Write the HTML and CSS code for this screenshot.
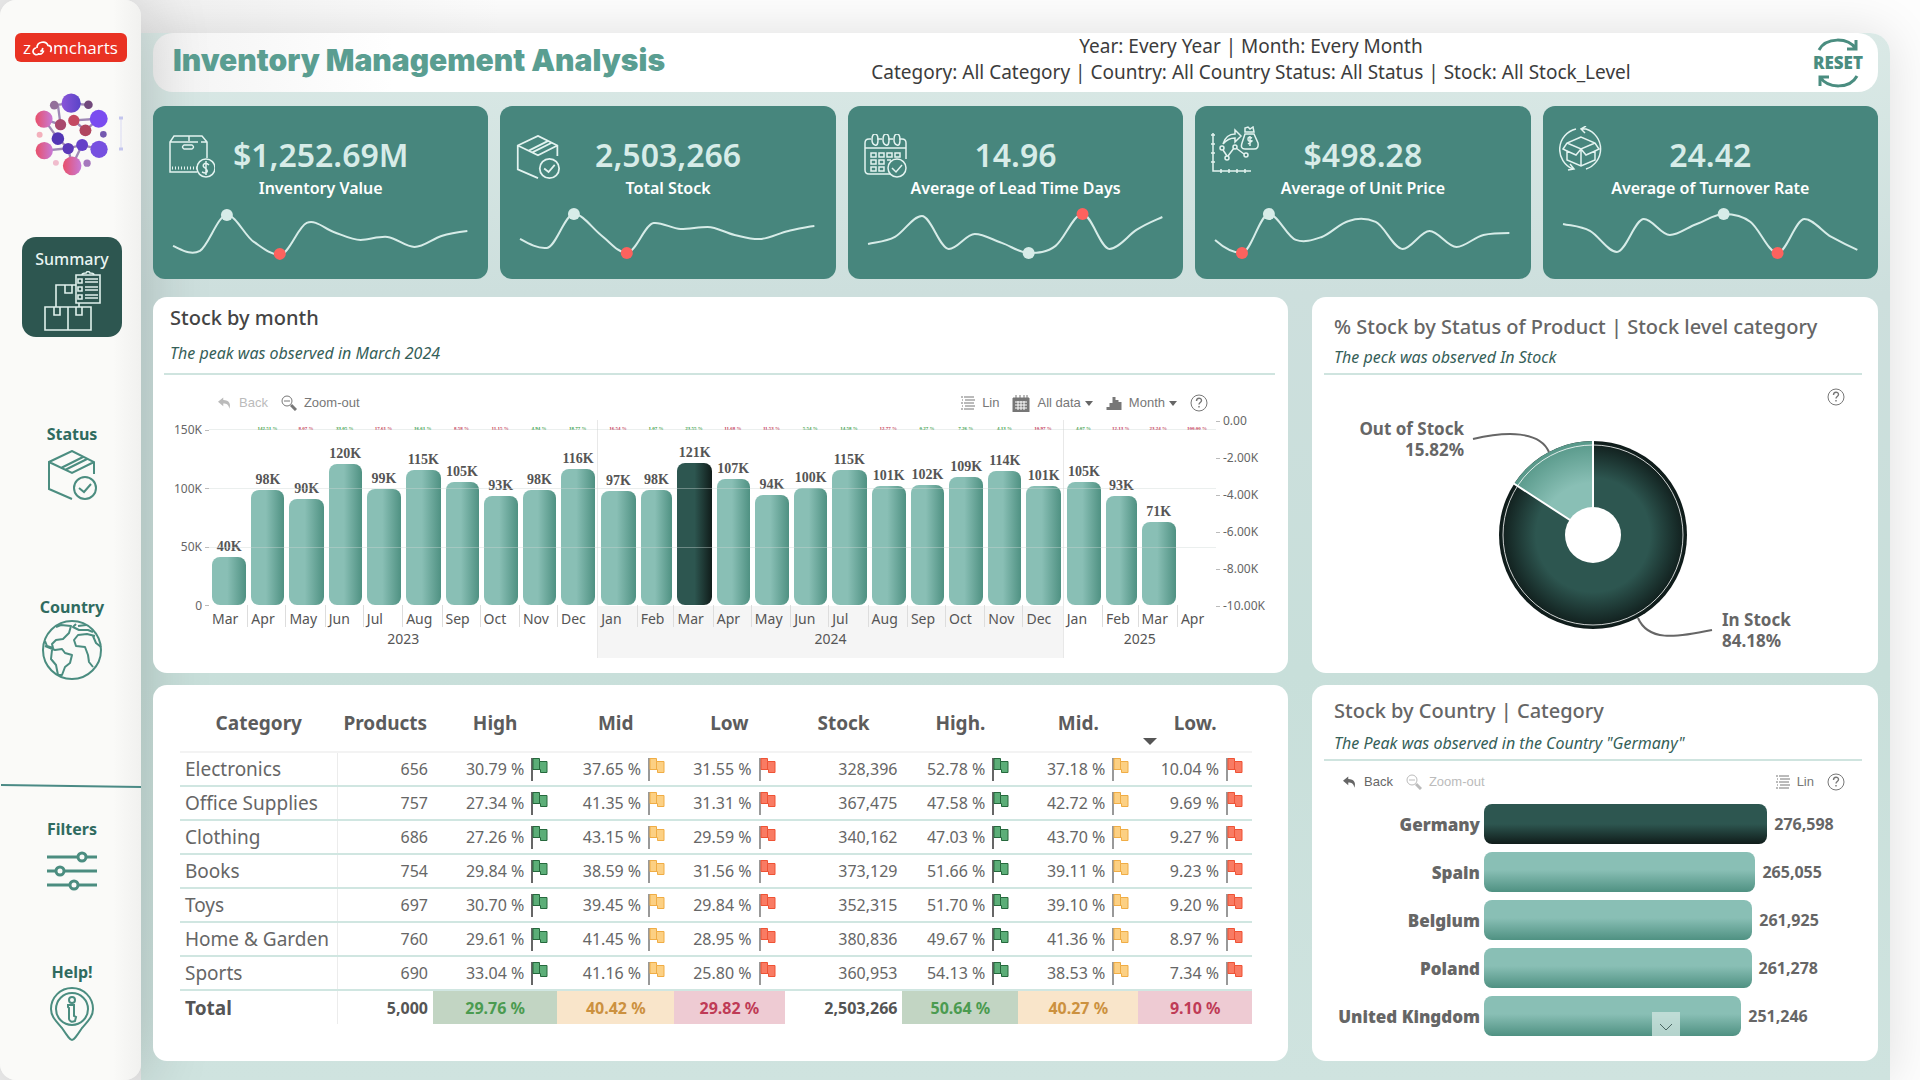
FILE: index.html
```html
<!DOCTYPE html>
<html lang="en">
<head>
<meta charset="utf-8">
<title>Inventory Management Analysis</title>
<link rel="stylesheet" href="styles.css">
</head>
<body>
<svg class="defs" aria-hidden="true">
  <defs>
    <symbol id="flag" viewBox="0 0 17 24">
      <path class="pole" d="M1 1V24"/>
      <path class="cloth" d="M2 1.500H8.500V4.500H16V15.500H9.500V12.500H2Z"/>
      <path class="fold" d="M8.500 4.500V12.500"/>
    </symbol>
    <symbol id="back" viewBox="0 0 16 14">
      <path fill="currentColor" d="M6 0 0 5l6 5V7c4 0 6 1 7 6 2-5 0-10-7-10Z"/>
    </symbol>
    <symbol id="zoomout" viewBox="0 0 16 16">
      <circle cx="6" cy="6" r="5" fill="none" stroke="currentColor"/>
      <path d="M3 6h6" stroke="currentColor"/>
      <path d="m10 10 5 5" stroke="currentColor" stroke-width="3"/>
    </symbol>
    <symbol id="lines" viewBox="0 0 14 14">
      <path d="M0 1h2M3 1h10M1 4h1M4 4h10M0 7h2M3 7h10M1 10h1M4 10h10M0 13h2M3 13h10" stroke="currentColor"/>
    </symbol>
    <symbol id="help" viewBox="0 0 18 18">
      <circle cx="9" cy="9" r="8" fill="none" stroke="currentColor"/>
      <path d="M6.500 7c0-3.500 5-3.500 5-.5 0 2-2.500 2-2.500 4M9 12v1.500" fill="none" stroke="currentColor" stroke-width="1.400"/>
    </symbol>
    <symbol id="boxcheck" viewBox="0 0 50 50">
      <path d="M25 49 2 39V12L25 1l22 11v12M2 12l23 11 22-11M14 18 36 7M18 20 40 9" fill="none" stroke="currentColor" stroke-width="2"/>
      <circle cx="38" cy="38" r="11" fill="none" stroke="currentColor" stroke-width="2"/>
      <path d="m32 38 5 4 7-8" fill="none" stroke="currentColor" stroke-width="2"/>
    </symbol>
  </defs>
</svg>
<div class="page">
  <aside class="sidebar">
    <a class="brand" href="#" aria-label="zoomcharts"><span>z</span><svg viewBox="0 0 26 18"><path d="M6 9a4 4 0 1 0 3 7c4 1 5-1 6-4M7 9c0-8 11-9 13-3 4 0 5 4 3 8M11 13l2-1 1-3" fill="none" stroke="#fff" stroke-width="2"/></svg><span>mcharts</span></a>
    <div class="gem">
      <svg class="gem-art" viewBox="102 276 226 252">
        <defs>
          <linearGradient id="pink" x1="0" x2="1"><stop offset="0" stop-color="#e8506a"/><stop offset="1" stop-color="#c77ad8"/></linearGradient>
          <linearGradient id="violet" x1="0" x2="1"><stop offset="0" stop-color="#8a55d8"/><stop offset="1" stop-color="#5a44c8"/></linearGradient>
        </defs>
        <path d="M163 315 214 310 266 314M132 357l50 17-8-60M222 361l75-5-40 35-35-30M297 356l-40 35M174 416l-42-59M174 416l31 29 42-10 51 13M133 452l72-7M217 497l30-62M205 445l12 52" fill="none" stroke="#77589a" stroke-width="7" opacity=".7"/>
        <circle cx="214" cy="309" r="29" fill="url(#violet)"/><circle cx="132" cy="357" r="26" fill="url(#pink)"/>
        <circle cx="297" cy="356" r="27" fill="#7a4cf0"/><circle cx="133" cy="452" r="26" fill="url(#pink)"/>
        <circle cx="298" cy="448" r="26" fill="#7650e0"/><circle cx="217" cy="498" r="28" fill="url(#pink)"/>
        <circle cx="222" cy="361" r="17" fill="#c44a62"/><circle cx="182" cy="374" r="17" fill="#a9486c"/>
        <circle cx="257" cy="391" r="18" fill="#b0465f"/><circle cx="174" cy="416" r="19" fill="#5236b4"/>
        <circle cx="205" cy="446" r="17" fill="#5b38b8"/><circle cx="247" cy="435" r="18" fill="#6440c8"/>
        <circle cx="163" cy="315" r="13" fill="#93709a"/><circle cx="266" cy="314" r="13" fill="#71487c"/>
        <circle cx="119" cy="404" r="9" fill="#f3b0bc"/><circle cx="311" cy="403" r="10" fill="#7459b0"/>
        <circle cx="168" cy="489" r="9" fill="#f0bccd"/><circle cx="262" cy="490" r="11" fill="#a678bd"/>
      </svg>
      <svg class="gem-mark" viewBox="0 0 4 36"><path d="M2 2v32" stroke="#d9daf3"/><path d="M0 2h4M0 33h4" stroke="#c3c5ee" stroke-width="3"/></svg>
    </div>
    <nav class="nav">
      <button class="nav-item nav-active" type="button">Summary
        <svg width="58" height="60" viewBox="0 0 58 60" fill="none" stroke="#dff0ec" stroke-width="1.600">
          <path d="M2 36h46v23H2ZM25 36v23M11 36v8h6v-8M33 36v8h6v-8M36 36v-4M13 36V14h20M22 14v8h7v-8"/>
          <path d="M33 4h24v28H33ZM39 4q0-2 4-2 2-3 4 0 4 0 4 2M35 8h4v4h-4ZM35 16h4v4h-4ZM35 24h4v4h-4ZM42 8h13M42 11h13M42 16h13M42 19h13M42 24h13M42 27h13"/>
        </svg>
      </button>
      <button class="nav-item nav-status" type="button">Status
        <svg width="50" height="50"><use href="#boxcheck"/></svg>
      </button>
      <button class="nav-item nav-country" type="button">Country
        <svg width="62" height="62" viewBox="0 0 62 62" fill="none" stroke="currentColor" stroke-width="2" stroke-linejoin="round">
          <circle cx="31" cy="31" r="29"/>
          <path d="M15 8l5-2 10 1-2 7-6 6-7 1-4 4 1 4-6-2-2-5M35 5l-3 3 6 3h9l5 2M37 7l8-1M54 17l-8-2-9 1-4 5 2 6 9 1 3 8 1 7 4 5M52 17l3 7 5 4M4 27l10 4 7-1 3 4 7 2-2 8-5 4-3 8-4 0-2-10-5-6 1-9"/>
        </svg>
      </button>
      <svg class="nav-rule" height="4" viewBox="0 0 141 4" preserveAspectRatio="none"><path d="M1 1 141 3" stroke="#4a8a85" stroke-width="2"/></svg>
      <button class="nav-item nav-filters" type="button">Filters
        <svg width="50" height="42" viewBox="0 0 50 42" fill="#fafaf8" stroke="currentColor" stroke-width="3"><path d="M0 7h50M0 21h50M0 35h50"/><circle cx="35" cy="7" r="4"/><circle cx="13" cy="21" r="4"/><circle cx="27" cy="35" r="4"/></svg>
      </button>
      <button class="nav-item nav-help" type="button">Help!
        <svg width="44" height="54" viewBox="0 0 44 54" fill="none" stroke="currentColor" stroke-width="2"><path d="M22 53c-2 0-4-3-10-12C5 33 1 29 1 22a21 21 0 0 1 42 0c0 7-4 11-11 19-6 9-8 12-10 12Z"/><circle cx="22" cy="22" r="16"/><circle cx="22" cy="13" r="3"/><path d="M18 18h6v11l2 1-1 4q-5 2-6-2V21l-1-1Z"/></svg>
      </button>
    </nav>
  </aside>

  <main class="board">
    <header class="topbar">
      <h1>Inventory Management Analysis</h1>
      <p>Year: Every Year | Month: Every Month<br>Category: All Category | Country: All Country Status: All Status | Stock: All Stock_Level</p>
      <button class="reset" type="button">
        <svg width="42" height="14" viewBox="0 0 42 14" fill="none" stroke="currentColor" stroke-width="3"><path d="M2 12C9 -1 31 -1 39 11M39 2v9h-9"/></svg>
        RESET
        <svg width="42" height="14" viewBox="0 0 42 14" fill="none" stroke="currentColor" stroke-width="3"><path d="M40 2C33 15 11 15 3 3M3 12V3h9"/></svg>
      </button>
    </header>

    <section class="kpis">
      <article class="kpi">
        <svg class="kpi-icon" width="46" height="46" viewBox="0 0 46 46"><path d="M28 38H1V8l4-6h28l5 6v16M1 8h28M32 8h6M20 2v5M15 11h8q3 2 0 4h-8q-3-2 0-4Z"/><path d="M3 34h26" stroke-dasharray="1 2" stroke-width="3"/><circle cx="37" cy="34" r="9"/><path d="M40 31q-3-3-5-1t1 4 2 4-5 0M37 27v14"/></svg>
        <div class="kpi-text"><strong>$1,252.69M</strong><span>Inventory Value</span></div>
        <svg class="spark" viewBox="0 0 296 56"><path d="M0 41C9 45 18 51 27 46C36 40 45 10 54 10C63 10 72 31 81 37C90 43 98 50 107 50C116 50 125 22 134 18C143 14 152 24 161 27C170 30 179 35 188 35C197 35 206 31 215 32C224 33 233 42 242 42C251 42 260 34 269 31C278 28 286 27 295 26"/><circle class="hi" cx="54" cy="10" r="6"/><circle class="lo" cx="107" cy="49" r="6"/></svg>
      </article>
      <article class="kpi">
        <svg class="kpi-icon" width="44" height="46" viewBox="0 0 50 50"><use href="#boxcheck"/></svg>
        <div class="kpi-text"><strong>2,503,266</strong><span>Total Stock</span></div>
        <svg class="spark" viewBox="0 0 296 56"><path d="M0 34C9 39 18 44 27 43C36 42 45 9 54 9C63 9 72 23 81 30C90 37 98 48 107 48C116 48 125 19 134 18C143 17 152 24 161 24C170 24 179 22 188 22C197 22 206 28 215 30C224 32 233 35 242 34C251 33 260 28 269 26C278 24 286 22 295 21"/><circle class="hi" cx="54" cy="9" r="6"/><circle class="lo" cx="107" cy="48" r="6"/></svg>
      </article>
      <article class="kpi">
        <svg class="kpi-icon" width="46" height="46" viewBox="0 0 46 46"><path d="M26 40H5q-4 0-4-4V9q0-4 4-4h2M13 5h5M24 5h5M35 5h3q4 0 4 4v16M1 14h41M8 6q0-6 3-6t3 6-3 5-3-5M19 6q0-6 3-6t3 6-3 5-3-5M30 6q0-6 3-6t3 6-3 5-3-5M7 19h5v4H7ZM15 19h5v4h-5ZM23 19h5v4h-5ZM31 19h5v4h-5ZM7 26h5v4H7ZM15 26h5v4h-5ZM23 26h4M7 33h5v4H7ZM15 33h5v4h-5Z"/><circle cx="33" cy="34" r="9"/><path d="m28 34 4 4 6-7"/></svg>
        <div class="kpi-text"><strong>14.96</strong><span>Average of Lead Time Days</span></div>
        <svg class="spark" viewBox="0 0 296 56"><path d="M0 39C9 37 18 37 27 32C36 27 45 11 54 11C63 11 72 44 81 44C90 44 98 29 107 29C116 29 125 35 134 38C143 41 152 48 161 48C170 48 179 48 188 41C197 34 206 9 215 9C224 9 233 44 242 44C251 44 260 31 269 25C278 19 286 16 295 12"/><circle class="hi" cx="161" cy="48" r="6"/><circle class="lo" cx="215" cy="9" r="6"/></svg>
      </article>
      <article class="kpi">
        <svg class="kpi-icon icon-high" width="48" height="48" viewBox="0 0 48 48"><path d="M2 7v38h38M0 9h4M0 18h4M0 27h4M0 36h4M10 43v4M18 43v4M26 43v4M34 43v4M12 24l4 6M17 30l6-8M25 22l8 6M12 18Q15 8 24 8V4l6 6-6 6v-4Q17 12 12 18M34 6h9l-1-5-3 2-2-2-3 1ZM34 8h9l4 9q1 6-4 6h-9q-5 0-3-6Z"/><circle cx="11" cy="22" r="2"/><circle cx="16" cy="32" r="2"/><circle cx="24" cy="21" r="2"/><circle cx="35" cy="29" r="2"/><path d="M41 12q-4-2-4 1t3 2-3 3M39 10v10"/></svg>
        <div class="kpi-text"><strong>$498.28</strong><span>Average of Unit Price</span></div>
        <svg class="spark" viewBox="0 0 296 56"><path d="M0 35C9 43 18 48 27 48C36 48 45 9 54 9C63 9 72 32 81 35C90 38 98 35 107 32C116 29 125 18 134 16C143 13 152 13 161 17C170 21 179 44 188 44C197 44 206 26 215 26C224 26 233 42 242 42C251 42 260 32 269 30C278 28 286 28 295 28"/><circle class="lo" cx="27" cy="48" r="6"/><circle class="hi" cx="54" cy="9" r="6"/></svg>
      </article>
      <article class="kpi">
        <svg class="kpi-icon icon-high" width="44" height="46" viewBox="0 0 44 46"><path d="M17 3A21 21 0 0 0 14 43M11 38l4 5-6 1M27 43A21 21 0 0 0 27 3l-5 0M27 0l-5 3 4 4M22 11 8 17l-4 6 4 2v9l14 6 14-6v-9l4-2-4-6ZM8 17l14 6 14-6M22 23v17M22 23l-5 6-9-4M22 23l5 6 9-4"/></svg>
        <div class="kpi-text"><strong>24.42</strong><span>Average of Turnover Rate</span></div>
        <svg class="spark" viewBox="0 0 296 56"><path d="M0 19C9 21 18 21 27 26C36 31 45 47 54 47C63 47 72 14 81 14C90 14 98 30 107 30C116 30 125 22 134 19C143 16 152 9 161 9C170 9 179 10 188 17C197 24 206 48 215 48C224 48 233 14 242 14C251 14 260 27 269 32C278 37 286 41 295 45"/><circle class="hi" cx="161" cy="9" r="6"/><circle class="lo" cx="215" cy="48" r="6"/></svg>
      </article>
    </section>

    <section class="cards">
      <article class="card">
        <div class="card-head head-wide"><h2>Stock by month</h2><p>The peak was observed in March 2024</p></div>
        <div class="toolbar toolbar-month">
          <button class="tool tool-off" type="button"><svg width="14" height="13"><use href="#back"/></svg>Back</button>
          <button class="tool" type="button"><svg width="16" height="16"><use href="#zoomout"/></svg>Zoom-out</button>
          <span class="tool-gap"></span>
          <button class="tool" type="button"><svg width="14" height="14"><use href="#lines"/></svg>Lin</button>
          <button class="tool" type="button"><svg width="18" height="17" viewBox="0 0 18 17"><path d="M1 3h16v14H1ZM4 0v5M8 0v5M12 0v5M15 0v5" fill="currentColor" stroke="currentColor"/><path d="M3 7h12M3 10h12M3 13h12M6 6v9M9 6v9M12 6v9" stroke="#fff"/></svg>All data<i class="caret"></i></button>
          <button class="tool" type="button"><svg width="16" height="14" viewBox="0 0 16 14"><path d="M2 14v-3M5 14V7M8 14V1M11 14V4M14 14V6" stroke="currentColor" stroke-width="3"/></svg>Month<i class="caret"></i></button>
          <button class="tool" type="button" aria-label="Help"><svg width="18" height="18"><use href="#help"/></svg></button>
        </div>
        <div class="chart">
          <div class="axis axis-left"><span>150K</span><span>100K</span><span>50K</span><span>0</span></div>
          <div class="plot">
            <div class="year" style="flex-grow:306">
              <div class="months">
                <div class="month" style="flex-grow:31"><div class="col"><b>40K</b><i style="height:25.7%"></i></div><span>Mar</span></div>
                <div class="month" style="flex-grow:30"><div class="col"><em class="up">142.51 %</em><b>98K</b><i style="height:62.2%"></i></div><span>Apr</span></div>
                <div class="month" style="flex-grow:31"><div class="col"><em class="down">8.07 %</em><b>90K</b><i style="height:57.1%"></i></div><span>May</span></div>
                <div class="month" style="flex-grow:30"><div class="col"><em class="up">33.05 %</em><b>120K</b><i style="height:76.2%"></i></div><span>Jun</span></div>
                <div class="month" style="flex-grow:31"><div class="col"><em class="down">17.61 %</em><b>99K</b><i style="height:62.8%"></i></div><span>Jul</span></div>
                <div class="month" style="flex-grow:31"><div class="col"><em class="up">16.61 %</em><b>115K</b><i style="height:72.9%"></i></div><span>Aug</span></div>
                <div class="month" style="flex-grow:30"><div class="col"><em class="down">8.58 %</em><b>105K</b><i style="height:66.6%"></i></div><span>Sep</span></div>
                <div class="month" style="flex-grow:31"><div class="col"><em class="down">11.15 %</em><b>93K</b><i style="height:59%"></i></div><span>Oct</span></div>
                <div class="month" style="flex-grow:30"><div class="col"><em class="up">4.94 %</em><b>98K</b><i style="height:62.2%"></i></div><span>Nov</span></div>
                <div class="month" style="flex-grow:31"><div class="col"><em class="up">18.77 %</em><b>116K</b><i style="height:73.6%"></i></div><span>Dec</span></div>
              </div>
              <div class="year-name">2023</div>
            </div>
            <div class="year year-alt" style="flex-grow:366">
              <div class="months">
                <div class="month" style="flex-grow:31"><div class="col"><em class="down">16.54 %</em><b>97K</b><i style="height:61.5%"></i></div><span>Jan</span></div>
                <div class="month" style="flex-grow:29"><div class="col"><em class="up">1.07 %</em><b>98K</b><i style="height:62.2%"></i></div><span>Feb</span></div>
                <div class="month peak" style="flex-grow:31"><div class="col"><em class="up">23.55 %</em><b>121K</b><i style="height:76.7%"></i></div><span>Mar</span></div>
                <div class="month" style="flex-grow:30"><div class="col"><em class="down">11.68 %</em><b>107K</b><i style="height:67.9%"></i></div><span>Apr</span></div>
                <div class="month" style="flex-grow:31"><div class="col"><em class="down">11.53 %</em><b>94K</b><i style="height:59.6%"></i></div><span>May</span></div>
                <div class="month" style="flex-grow:30"><div class="col"><em class="up">5.54 %</em><b>100K</b><i style="height:63.4%"></i></div><span>Jun</span></div>
                <div class="month" style="flex-grow:31"><div class="col"><em class="up">14.58 %</em><b>115K</b><i style="height:72.9%"></i></div><span>Jul</span></div>
                <div class="month" style="flex-grow:31"><div class="col"><em class="down">12.77 %</em><b>101K</b><i style="height:64.1%"></i></div><span>Aug</span></div>
                <div class="month" style="flex-grow:30"><div class="col"><em class="up">0.27 %</em><b>102K</b><i style="height:64.7%"></i></div><span>Sep</span></div>
                <div class="month" style="flex-grow:31"><div class="col"><em class="up">7.26 %</em><b>109K</b><i style="height:69.1%"></i></div><span>Oct</span></div>
                <div class="month" style="flex-grow:30"><div class="col"><em class="up">4.13 %</em><b>114K</b><i style="height:72.3%"></i></div><span>Nov</span></div>
                <div class="month" style="flex-grow:31"><div class="col"><em class="down">10.97 %</em><b>101K</b><i style="height:64.1%"></i></div><span>Dec</span></div>
              </div>
              <div class="year-name">2024</div>
            </div>
            <div class="year" style="flex-grow:120">
              <div class="months">
                <div class="month" style="flex-grow:31"><div class="col"><em class="up">4.07 %</em><b>105K</b><i style="height:66.6%"></i></div><span>Jan</span></div>
                <div class="month" style="flex-grow:28"><div class="col"><em class="down">12.13 %</em><b>93K</b><i style="height:59%"></i></div><span>Feb</span></div>
                <div class="month" style="flex-grow:31"><div class="col"><em class="down">23.24 %</em><b>71K</b><i style="height:45%"></i></div><span>Mar</span></div>
                <div class="month" style="flex-grow:30"><div class="col"><em class="down">100.00 %</em></div><span>Apr</span></div>
              </div>
              <div class="year-name">2025</div>
            </div>
            <div class="gridlines"><i></i><i></i><i></i></div>
          </div>
          <div class="axis axis-right"><span>0.00</span><span>-2.00K</span><span>-4.00K</span><span>-6.00K</span><span>-8.00K</span><span>-10.00K</span></div>
        </div>
      </article>

      <article class="card">
        <div class="card-head head-status"><h2>% Stock by Status of Product | Stock level category</h2><p>The peck was observed In Stock</p></div>
        <div class="toolbar">
          <span class="tool-gap"></span>
          <button class="tool" type="button" aria-label="Help"><svg width="18" height="18"><use href="#help"/></svg></button>
        </div>
        <svg class="donut" viewBox="0 0 566 262">
          <defs>
            <radialGradient id="dark" gradientUnits="userSpaceOnUse" cx="281" cy="124" r="95"><stop offset=".6" stop-color="#2d5650"/><stop offset=".95" stop-color="#12211f"/><stop offset="1" stop-color="#0c1716"/></radialGradient>
            <radialGradient id="light" gradientUnits="userSpaceOnUse" cx="281" cy="124" r="95"><stop offset=".55" stop-color="#89bfb5"/><stop offset="1" stop-color="#569788"/></radialGradient>
          </defs>
          <circle cx="281" cy="124" r="94" fill="url(#dark)"/>
          <path d="M281 124V30A94 94 0 0 0 202 73Z" fill="url(#light)"/>
          <circle cx="281" cy="124" r="90" fill="none" stroke="#fff" opacity=".8"/>
          <path d="M281 29V124L201 72" fill="none" stroke="#fff" stroke-width="2"/>
          <circle cx="281" cy="124" r="28" fill="#fff"/>
          <path d="M161 28C195 20 228 20 237 41M326 207C336 230 362 227 400 219" fill="none" stroke="#666" stroke-width="2"/>
          <g class="donut-text"><text x="152" y="24" text-anchor="end">Out of Stock</text><text x="152" y="45" text-anchor="end">15.82%</text><text x="410" y="215">In Stock</text><text x="410" y="236">84.18%</text></g>
        </svg>
      </article>

      <article class="card card-table">
        <table>
          <colgroup><col class="c-cat"><col class="c-prod"><col class="c-hi"><col class="c-mid"><col class="c-low"><col class="c-stock"><col class="c-hi2"><col class="c-mid2"><col class="c-low2"></colgroup>
          <thead><tr><th>Category</th><th>Products</th><th>High</th><th>Mid</th><th>Low</th><th>Stock</th><th>High.</th><th>Mid.</th><th class="sorted">Low.</th></tr></thead>
          <tbody>
            <tr><td>Electronics</td><td>656</td><td>30.79 %<svg class="g"><use href="#flag"/></svg></td><td>37.65 %<svg class="y"><use href="#flag"/></svg></td><td>31.55 %<svg class="r"><use href="#flag"/></svg></td><td>328,396</td><td>52.78 %<svg class="g"><use href="#flag"/></svg></td><td>37.18 %<svg class="y"><use href="#flag"/></svg></td><td>10.04 %<svg class="r"><use href="#flag"/></svg></td></tr>
            <tr><td>Office Supplies</td><td>757</td><td>27.34 %<svg class="g"><use href="#flag"/></svg></td><td>41.35 %<svg class="y"><use href="#flag"/></svg></td><td>31.31 %<svg class="r"><use href="#flag"/></svg></td><td>367,475</td><td>47.58 %<svg class="g"><use href="#flag"/></svg></td><td>42.72 %<svg class="y"><use href="#flag"/></svg></td><td>9.69 %<svg class="r"><use href="#flag"/></svg></td></tr>
            <tr><td>Clothing</td><td>686</td><td>27.26 %<svg class="g"><use href="#flag"/></svg></td><td>43.15 %<svg class="y"><use href="#flag"/></svg></td><td>29.59 %<svg class="r"><use href="#flag"/></svg></td><td>340,162</td><td>47.03 %<svg class="g"><use href="#flag"/></svg></td><td>43.70 %<svg class="y"><use href="#flag"/></svg></td><td>9.27 %<svg class="r"><use href="#flag"/></svg></td></tr>
            <tr><td>Books</td><td>754</td><td>29.84 %<svg class="g"><use href="#flag"/></svg></td><td>38.59 %<svg class="y"><use href="#flag"/></svg></td><td>31.56 %<svg class="r"><use href="#flag"/></svg></td><td>373,129</td><td>51.66 %<svg class="g"><use href="#flag"/></svg></td><td>39.11 %<svg class="y"><use href="#flag"/></svg></td><td>9.23 %<svg class="r"><use href="#flag"/></svg></td></tr>
            <tr><td>Toys</td><td>697</td><td>30.70 %<svg class="g"><use href="#flag"/></svg></td><td>39.45 %<svg class="y"><use href="#flag"/></svg></td><td>29.84 %<svg class="r"><use href="#flag"/></svg></td><td>352,315</td><td>51.70 %<svg class="g"><use href="#flag"/></svg></td><td>39.10 %<svg class="y"><use href="#flag"/></svg></td><td>9.20 %<svg class="r"><use href="#flag"/></svg></td></tr>
            <tr><td>Home &amp; Garden</td><td>760</td><td>29.61 %<svg class="g"><use href="#flag"/></svg></td><td>41.45 %<svg class="y"><use href="#flag"/></svg></td><td>28.95 %<svg class="r"><use href="#flag"/></svg></td><td>380,836</td><td>49.67 %<svg class="g"><use href="#flag"/></svg></td><td>41.36 %<svg class="y"><use href="#flag"/></svg></td><td>8.97 %<svg class="r"><use href="#flag"/></svg></td></tr>
            <tr><td>Sports</td><td>690</td><td>33.04 %<svg class="g"><use href="#flag"/></svg></td><td>41.16 %<svg class="y"><use href="#flag"/></svg></td><td>25.80 %<svg class="r"><use href="#flag"/></svg></td><td>360,953</td><td>54.13 %<svg class="g"><use href="#flag"/></svg></td><td>38.53 %<svg class="y"><use href="#flag"/></svg></td><td>7.34 %<svg class="r"><use href="#flag"/></svg></td></tr>
          </tbody>
          <tfoot><tr><td>Total</td><td>5,000</td><td class="t-g">29.76 %</td><td class="t-y">40.42 %</td><td class="t-r">29.82 %</td><td>2,503,266</td><td class="t-g">50.64 %</td><td class="t-y">40.27 %</td><td class="t-r">9.10 %</td></tr></tfoot>
        </table>
      </article>

      <article class="card">
        <div class="card-head head-country"><h2>Stock by Country | Category</h2><p>The Peak was observed in the Country "Germany"</p></div>
        <div class="toolbar toolbar-country">
          <button class="tool tool-dark" type="button"><svg width="14" height="13"><use href="#back"/></svg>Back</button>
          <button class="tool tool-off" type="button"><svg width="16" height="16"><use href="#zoomout"/></svg>Zoom-out</button>
          <span class="tool-gap"></span>
          <button class="tool" type="button"><svg width="14" height="14"><use href="#lines"/></svg>Lin</button>
          <button class="tool" type="button" aria-label="Help"><svg width="18" height="18"><use href="#help"/></svg></button>
        </div>
        <div class="countries">
          <div class="country top"><b>Germany</b><div class="track"><i style="width:71.9%"></i><span>276,598</span></div></div>
          <div class="country"><b>Spain</b><div class="track"><i style="width:68.9%"></i><span>265,055</span></div></div>
          <div class="country"><b>Belgium</b><div class="track"><i style="width:68.1%"></i><span>261,925</span></div></div>
          <div class="country"><b>Poland</b><div class="track"><i style="width:67.9%"></i><span>261,278</span></div></div>
          <div class="country"><b>United Kingdom</b><div class="track"><i style="width:65.3%"></i><span>251,246</span></div></div>
          <button class="more" type="button" aria-label="Scroll down"><svg width="14" height="8" viewBox="0 0 14 8"><path d="m1 1 6 6 6-6" fill="none" stroke="#4a6662"/></svg></button>
        </div>
      </article>
    </section>
  </main>
</div>
</body>
</html>
```
FILE: styles.css
```css
* { box-sizing: border-box; }
body { margin: 0; background: #fdfdfd; font-family: "Noto Sans", "Open Sans", sans-serif; color: #666; }
h1, h2, p { margin: 0; }
button { border: 0; padding: 0; background: none; font: inherit; color: inherit; }
svg { display: block; }
.defs { position: absolute; width: 0; height: 0; }

.page { display: flex; min-height: 100vh; padding-right: 30px; background: linear-gradient(90deg, #f1f1f1 141px, #fdfdfd 500px); }

/* sidebar */
.sidebar { position: relative; z-index: 1; flex: none; width: 141px; padding-top: 33px; border-radius: 16px; background: linear-gradient(90deg, #fafaf8 80%, #f1f1ef); box-shadow: 0 0 70px rgba(0, 0, 0, .2); display: flex; flex-direction: column; align-items: center; }
.brand { display: flex; align-items: center; justify-content: center; width: 112px; height: 29px; border-radius: 6px; background: #e93223; color: #fff; font-family: "Open Sans", sans-serif; font-size: 17px; line-height: 24px; text-decoration: none; }
.brand svg { width: 22px; height: 16px; }
.gem { display: flex; align-items: center; gap: 10px; margin: 30px 0 0 16px; }
.gem-art { width: 75px; height: 84px; }
.gem-mark { width: 4px; height: 36px; }
.nav { display: flex; flex-direction: column; align-items: center; width: 100%; margin-top: 61px; }
.nav-item { display: flex; flex-direction: column; align-items: center; gap: 4px; margin-left: 3px; font-size: 16px; line-height: 24px; font-weight: 700; color: #2f6b60; }
.nav-item svg { color: #4b8d80; }
.nav-active { width: 100px; height: 100px; padding: 10px 0 6px; gap: 0; border-radius: 14px; background: #2d5650; color: #e9f4f2; font-weight: 500; }
.nav-status { margin-top: 85px; }
.nav-country { margin-top: 95px; gap: 0; }
.nav-rule { width: 100%; margin-top: 103px; }
.nav-filters { margin-top: 29px; gap: 9px; }
.nav-help { margin-top: 68px; gap: 3px; }

/* board */
.board { flex: 1; min-width: 0; margin-top: 33px; padding: 0 12px 19px; border-radius: 0 20px 0 0; background: linear-gradient(#dae9e6, #cddfdd 260px, #c8dfda 640px, #cfe3df); box-shadow: 0 0 50px rgba(0, 0, 0, .12); }
.topbar { display: grid; grid-template-columns: auto 1fr auto; align-items: center; height: 59px; padding: 0 15px 0 20px; border-radius: 20px; background: linear-gradient(90deg, #f3f3f3, #fff 240px); }
.topbar h1 { padding-bottom: 5px; font-family: Inter, sans-serif; font-weight: 900; font-size: 30px; line-height: 32px; color: #5a9e91; white-space: nowrap; }
.topbar p { align-self: start; padding-left: 24px; font-size: 19px; line-height: 26px; color: #3c3c3c; text-align: center; white-space: nowrap; }
.reset { display: flex; flex-direction: column; align-items: center; font-family: "Open Sans", sans-serif; font-weight: 800; font-size: 17px; line-height: 22px; color: #4a8d80; }

.kpis, .cards { position: relative; z-index: 2; display: grid; }
.kpis { grid-template-columns: repeat(5, 1fr); gap: 12px; margin-top: 14px; }
.kpi { display: grid; grid-template-rows: 99px auto; height: 173px; padding: 0 20px; border-radius: 12px; background: #47867d; }
.kpi-icon, .kpi-text { grid-area: 1 / 1; }
.kpi-icon { margin: 28px 0 0 -4px; color: #e3f3f0; fill: none; stroke: #e3f3f0; stroke-width: 1.500; }
.icon-high { margin-top: 20px; }
.kpi-text { display: flex; flex-direction: column; align-items: center; padding-top: 28px; color: #fff; }
.kpi-text strong { font-size: 32px; line-height: 42px; font-weight: 600; color: #d7ece8; }
.kpi-text span { font-size: 16px; line-height: 24px; font-weight: 600; }
.spark { width: 100%; fill: none; stroke: #d7ece8; stroke-width: 2; overflow: visible; }
.spark .hi { fill: #d7ece8; stroke: none; }
.spark .lo { fill: #fd625e; stroke: none; }

.cards { grid-template-columns: 1135fr 566fr; gap: 12px 24px; margin-top: 18px; }
.card { min-width: 0; height: 376px; border-radius: 14px; background: #fff; overflow: hidden; }
.card-head { margin: 0 16px 0 12px; padding: 0 0 4px 10px; border-bottom: 2px solid #cfe4df; }
.card-head h2 { font-size: 20px; line-height: 30px; font-weight: 500; }
.card-head p { font-size: 16px; line-height: 24px; font-style: italic; color: #356058; }
.head-wide { margin-left: 11px; margin-right: 13px; padding: 6px 0 8px 6px; }
.head-wide h2 { color: #444; }
.head-wide p { margin-top: 8px; }
.head-status { padding-top: 15px; }
.head-status p { margin-top: 3px; }
.head-country { padding-top: 11px; }
.head-country p { margin-top: 5px; }

.toolbar { display: flex; align-items: center; gap: 13px; height: 24px; margin: 10px 33px 2px 31px; font-family: "Liberation Sans", sans-serif; font-size: 13px; color: #777; }
.toolbar-month { margin: 16px 80px 5px 65px; }
.toolbar-country { margin-top: 9px; }
.tool { display: flex; align-items: center; gap: 7px; line-height: 16px; }
.tool-off { color: #bbb; }
.tool-dark { color: #666; }
.tool-gap { flex: 1; }
.caret { border: 4px solid transparent; border-top: 5px solid #666; border-bottom: 0; margin-left: -3px; }

/* monthly chart */
.chart { display: flex; height: 238px; }
.axis { display: flex; flex-direction: column; justify-content: space-between; font-size: 12px; line-height: 16px; }
.axis span { display: flex; align-items: center; gap: 3px; }
.axis-left { width: 56px; height: 194px; padding-top: 2px; align-items: flex-end; }
.axis-left span::after, .axis-right span::before { content: ""; width: 4px; height: 1px; background: #bbb; }
.axis-right { width: 72px; height: 201px; margin-top: -7px; font-size: 12px; }
.plot { position: relative; flex: 1; display: flex; }
.year { flex: 1 1 0; min-width: 0; display: flex; flex-direction: column; }
.year-alt { border: solid #e8e8e8; border-width: 0 1px; background: linear-gradient(#fff 186px, #f5f5f5 186px); }
.months { display: flex; }
.month { flex: 1 1 0; min-width: 0; }
.month + .month > span { box-shadow: -1px 0 #ddd; }
.month > span { display: block; height: 22px; padding-left: 3px; font-size: 14px; line-height: 27px; color: #555; }
.col { position: relative; height: 185px; padding: 0 2px 0 3px; display: flex; flex-direction: column; justify-content: flex-end; align-items: center; }
.col b { font-family: "Liberation Serif", serif; font-size: 14px; line-height: 20px; white-space: nowrap; color: #555; }
.col i { width: 100%; border-radius: 8px; background: linear-gradient(90deg, #89bfb5 45%, #4f9182); flex: none; }
.peak .col i { background: linear-gradient(90deg, #2d5650 50%, #101c1a); }
.col em { position: absolute; top: 6px; left: 0; right: 0; text-align: center; font: bold 5px/6px "Liberation Serif", serif; white-space: nowrap; }
.up { color: #2f9a3c; }
.down { color: #c4304f; }
.year-name { text-align: center; font-size: 14px; line-height: 24px; color: #555; }
.gridlines { position: absolute; top: 9px; left: 0; right: 0; height: 177px; display: flex; flex-direction: column; }
.gridlines i { flex: 1; border-top: 1px solid rgba(205, 215, 212, .4); }

.donut { width: 100%; height: auto; }
.donut-text { font-size: 17px; font-weight: 700; fill: #666; }

/* table */
.card-table { padding: 13px 36px 0 27px; }
table { width: 100%; table-layout: fixed; border-collapse: collapse; font-size: 16px; line-height: 24px; }
.c-cat { width: 14.7%; } .c-prod { width: 8.9%; } .c-hi { width: 11.6%; } .c-mid { width: 10.9%; } .c-low { width: 10.3%; }
.c-stock { width: 11%; } .c-hi2 { width: 10.8%; } .c-mid2 { width: 11.2%; } .c-low2 { width: 10.6%; }
th { height: 54px; padding: 0 0 3px; font-size: 19px; font-weight: 700; color: #5c5c5c; border-bottom: 2px solid #f3f3f3; }
.sorted { position: relative; }
.sorted::after { content: ""; position: absolute; left: 5px; bottom: 6px; border: 7px solid transparent; border-top-color: #555; border-bottom: 0; }
td { height: 34px; padding: 0 5px; text-align: right; white-space: nowrap; }
td:first-child { text-align: left; font-size: 19px; border-right: 1px solid #ececec; }
tbody td { border-bottom: 2px solid #d0e6e1; }
tbody td svg { display: inline-block; vertical-align: middle; width: 17px; height: 24px; margin: -4px 4px 0 7px; }
tfoot td { font-weight: 700; color: #555; }
.g { --f: #5cae78; --s: #26693d; --p: #333; }
.y { --f: #fcd083; --s: #f0ad45; --p: #777; }
.r { --f: #f97b63; --s: #ef5335; --p: #777; }
.pole { stroke: var(--p); stroke-width: 1.500; }
.cloth { fill: var(--f); stroke: var(--s); }
.fold { stroke: var(--s); }
tfoot .t-g, tfoot .t-y, tfoot .t-r { text-align: center; }
tfoot .t-g { background: #c2d5c3; color: #4b9b50; }
tfoot .t-y { background: #f9e5ca; color: #cc913f; }
tfoot .t-r { background: #eecbd3; color: #bf3b56; }

/* countries */
.countries { position: relative; display: flex; flex-direction: column; gap: 8px; padding: 8px 0 0; }
.country { display: flex; align-items: center; gap: 4px; height: 40px; font-size: 17px; font-weight: 700; }
.country b { width: 168px; text-align: right; white-space: nowrap; }
.track { flex: 1; display: flex; align-items: center; gap: 7px; height: 100%; }
.track i { height: 100%; border-radius: 8px; background: linear-gradient(#89bfb5 45%, #4f9182); }
.track span { font-size: 16px; }
.top .track i { background: linear-gradient(#2d5650 50%, #101c1a); }
.more { position: absolute; left: 60%; bottom: 0; width: 28px; height: 24px; display: flex; align-items: flex-end; justify-content: center; padding-bottom: 5px; background: rgba(205, 228, 223, .8); }
```
